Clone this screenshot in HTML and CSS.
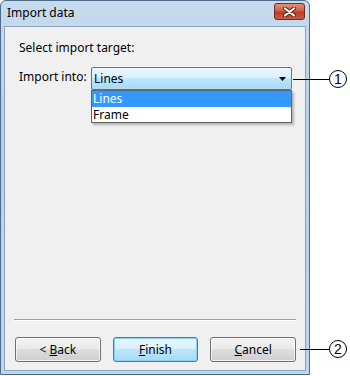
FILE: index.html
```html
<!DOCTYPE html>
<html>
<head>
<meta charset="utf-8">
<link rel="stylesheet" href="styles.css">
</head>
<body>
<div class="stage">
  <div class="window">
    <div class="titlebar">
      <span class="title">Import data</span>
      <span class="close"><svg width="13" height="10" viewBox="0 0 13 10"><path d="M2 1.5 L11 8.5 M11 1.5 L2 8.5" stroke="#5a1e14" stroke-width="4" stroke-linecap="round"/><path d="M2 1.5 L11 8.5 M11 1.5 L2 8.5" stroke="#ffffff" stroke-width="2.2" stroke-linecap="round"/></svg></span>
    </div>
    <div class="client">
      <div class="heading">Select import target:</div>
      <div class="row">
        <span class="label">Import into:</span>
        <div class="combo-wrap">
          <div class="combo">
            <span>Lines</span>
            <svg class="arrow" width="7" height="4" viewBox="0 0 7 4"><path d="M0 0 H7 L3.5 4 Z" fill="#000"/></svg>
          </div>
          <ul class="list">
            <li class="sel">Lines</li>
            <li>Frame</li>
          </ul>
        </div>
      </div>
      <div class="spacer"></div>
      <div class="separator"></div>
      <div class="buttons">
        <button class="btn">&lt; <u>B</u>ack</button>
        <button class="btn default"><u>F</u>inish</button>
        <button class="btn"><u>C</u>ancel</button>
      </div>
    </div>
  </div>
  <div class="callout c1"><span class="line"></span><span class="num">1</span></div>
  <div class="callout c2"><span class="line"></span><span class="num">2</span></div>
</div>
</body>
</html>
```
FILE: styles.css
```css
html, body {
  margin: 0;
  padding: 0;
  background: #ffffff;
}
body {
  font-family: "Noto Sans", "DejaVu Sans", sans-serif;
  font-size: 12px;
  color: #000;
}
.stage {
  position: relative;
  width: 350px;
  height: 376px;
}
.window {
  box-sizing: border-box;
  width: 310px;
  height: 375px;
  border: 1px solid #4e6b88;
  border-radius: 6px 6px 0 0;
  background: linear-gradient(#c7dbee, #b9d1e8 30%, #bfd6ec);
  padding: 0 3px 3px 3px;
  display: flex;
  flex-direction: column;
}
.titlebar {
  height: 25px;
  display: flex;
  align-items: center;
  justify-content: space-between;
  padding: 0 1px 0 3px;
}
.title {
  font-size: 12px;
  line-height: 15px;
  margin-top: -2px;
}
.close {
  box-sizing: border-box;
  width: 31px;
  height: 17px;
  margin-top: -4px;
  border: 1px solid #6e2b22;
  border-radius: 3px;
  background-color: #c9533c;
  background-image: linear-gradient(#e3917c, #d05c43 45%, #bd3b24 55%, #cc5a40);
  display: flex;
  align-items: center;
  justify-content: center;
}
.client {
  flex: 1;
  border: 1px solid #8aa5c0;
  background: #f0f0f0;
  display: flex;
  flex-direction: column;
  padding: 13px 9px 8px 9px;
}
.heading {
  line-height: 15px;
  padding-left: 5px;
}
.row {
  display: flex;
  align-items: flex-start;
  margin-top: 12px;
  padding-left: 5px;
}
.label {
  width: 72px;
  line-height: 15px;
  margin-top: 2px;
}
.combo-wrap {
  position: relative;
  width: 201px;
}
.combo {
  box-sizing: border-box;
  height: 23px;
  border: 1px solid #3c7fb1;
  border-radius: 2px;
  background: linear-gradient(#eaf6fd, #d9f0fc 45%, #bee6fd 50%, #a7d9f5);
  display: flex;
  align-items: center;
  justify-content: space-between;
  padding: 0 5px 0 2px;
  line-height: 15px;
}
.arrow {
  margin-top: 1px;
}
.list {
  position: absolute;
  top: 23px;
  left: 0;
  width: 201px;
  box-sizing: border-box;
  margin: 0;
  padding: 0;
  list-style: none;
  background: #fff;
  border: 1px solid #646464;
  box-shadow: 2px 2px 2px rgba(0,0,0,0.25);
}
.list li {
  height: 15px;
  line-height: 15px;
  padding-left: 1px;
}
.list li.sel {
  background: #3399ff;
  color: #fff;
  height: 16px;
}
.spacer {
  flex: 1;
}
.separator {
  height: 1px;
  background: #a0a0a0;
  border-bottom: 1px solid #ffffff;
  margin: 0 0 16px 0;
}
.buttons {
  display: flex;
  gap: 12px;
  padding-left: 1px;
}
.btn {
  box-sizing: border-box;
  width: 86px;
  height: 25px;
  border: 1px solid #707070;
  border-radius: 3px;
  background: linear-gradient(#f2f2f2, #ebebeb 45%, #dddddd 50%, #cfcfcf);
  font-family: "Noto Sans", "DejaVu Sans", sans-serif;
  font-size: 12px;
  color: #000;
  padding: 0;
  box-shadow: inset 0 0 0 1px rgba(255,255,255,0.7);
}
.btn u {
  text-decoration-thickness: 1px;
  text-underline-offset: 1px;
}
.btn.default {
  border-color: #3c7fb1;
  background: linear-gradient(#eaf6fd, #d9f0fc 45%, #bee6fd 50%, #a7d9f5);
  box-shadow: inset 0 0 0 1px #8ad0f5;
}
.callout {
  position: absolute;
  left: 293px;
  display: flex;
  align-items: center;
}
.callout .line {
  display: block;
  height: 1px;
  background: #000;
  width: 36px;
}
.callout .num {
  box-sizing: border-box;
  width: 18px;
  height: 18px;
  border: 1px solid #000;
  border-radius: 50%;
  display: flex;
  align-items: center;
  justify-content: center;
  font-family: "Liberation Sans", Arial, sans-serif;
  font-size: 14px;
  line-height: 1;
}
.c1 {
  top: 70px;
}
.c2 {
  top: 340px;
  left: 300px;
}
.c2 .line {
  width: 29px;
}
```
